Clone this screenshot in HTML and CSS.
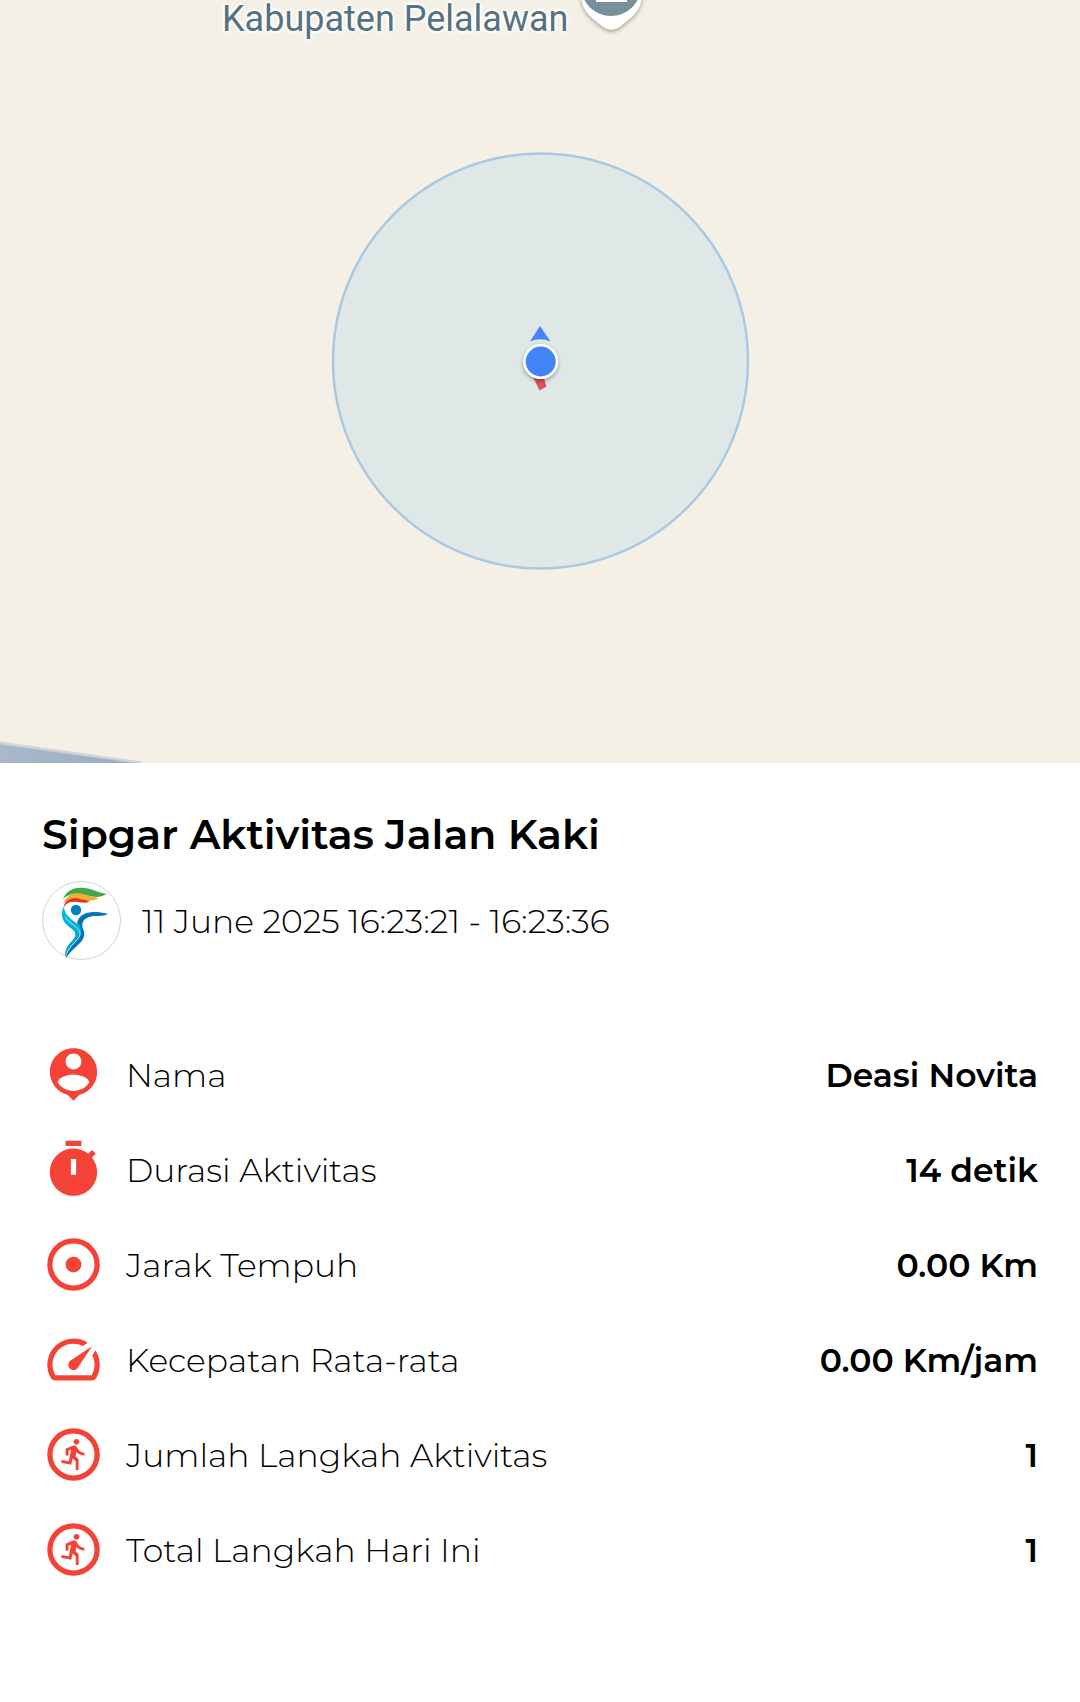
FILE: index.html
```html
<!DOCTYPE html>
<html lang="id">
<head>
<meta charset="utf-8">
<meta name="viewport" content="width=device-width, initial-scale=1">
<title>Sipgar Aktivitas Jalan Kaki</title>
<link rel="stylesheet" href="styles.css">
</head>
<body>
<main class="page">
  <section class="map" aria-label="Peta">
    <svg class="map-canvas" viewBox="0 0 1080 763" preserveAspectRatio="xMidYMid slice" aria-hidden="true">
      <defs>
        <filter id="shadow" x="-30%" y="-30%" width="160%" height="160%">
          <feDropShadow dx="0" dy="2" stdDeviation="2" flood-color="#000" flood-opacity=".35"/>
        </filter>
        <linearGradient id="water" x1="0" y1="0" x2="1" y2="0">
          <stop offset="0" stop-color="#a9b9ca"/>
          <stop offset="1" stop-color="#9aabc4"/>
        </linearGradient>
      </defs>
      <path d="M0 744L138 763H0z" fill="url(#water)"/>
      <path d="M0 743L142 763" stroke="#c3cad0" stroke-opacity=".7" stroke-width="3"/>
      <path d="M581 -8C581 12 592 17 602 26Q611 33 621 26C631 17 642 12 642 -8z" fill="#fff" filter="url(#shadow)"/>
      <circle cx="611" cy="-14" r="30" fill="#78909c"/>
      <path d="M596 0h31v2h-31z" fill="#fff"/>
      <circle cx="540.500" cy="361" r="207.500" fill="#dfe8e7" stroke="#a9c9e2" stroke-width="2.500"/>
      <path d="M533 377h10.500l3 9.500-7 4z" fill="#dd5656"/>
      <path d="M540 326l10.500 15.500Q540 337 530 341.500z" fill="#4285f4"/>
      <circle cx="540.700" cy="361.500" r="17.500" fill="#fff" filter="url(#shadow)"/>
      <circle cx="540.700" cy="361.500" r="15" fill="#4285f4"/>
    </svg>
    <span class="map-label">Kabupaten Pelalawan</span>
  </section>

  <section class="panel">
    <h1 class="title">Sipgar Aktivitas Jalan Kaki</h1>
    <div class="session">
      <svg class="logo" viewBox="0 0 79 79" aria-hidden="true">
        <defs>
          <linearGradient id="body" x1="0" y1="0" x2="0" y2="1">
            <stop offset="0" stop-color="#00c4e0"/>
            <stop offset="1" stop-color="#0a8fc0"/>
          </linearGradient>
        </defs>
        <circle cx="39.500" cy="39.500" r="39" fill="#fff" stroke="#d4d4d4"/>
        <path d="M21 18C25 8 34 6 43 7C51 8 57 12 65 13C54 19 47 14 38 13C31 12 25 14 21 18z" fill="#45a649"/>
        <path d="M21 23C25 13 33 11 41 13C47 15 52 16 57 17C48 22 42 18 35 18C29 17 24 19 21 23z" fill="#f2ae2e"/>
        <path d="M22 26C22 19 31 15 38 18C42 19 45 19 48 20C42 24 37 20 31 21C26 21 24 23 22 26z" fill="#e0332c"/>
        <circle cx="34" cy="29" r="5.200" fill="#0081bf"/>
        <path d="M22 25C17 35 21 42 30 48C36 53 33 57 28 62C24 67 22 72 24 76C24 68 32 63 38 57C43 50 40 46 33 41C26 36 22 32 22 25z" fill="url(#body)"/>
        <path d="M35 42C37 33 45 31 54 31C59 31 62 32 66 33C60 36 53 34 47 36C41 38 39 43 41 48C45 56 39 61 34 66C29 70 27 73 24 77C24 69 31 64 37 57C41 51 39 46 35 42z" fill="#0077b6"/>
        <path d="M23 36C29 44 39 47 38 54C36 60 27 65 25 72" fill="none" stroke="#fff" stroke-width=".7"/>
      </svg>
      <time class="session-time" datetime="2025-06-11T16:23:21">11 June 2025 16:23:21 - 16:23:36</time>
    </div>

    <dl class="stats">
      <div class="stat">
        <dt class="stat-name">
          <svg class="icon" viewBox="0 0 24 24" aria-hidden="true"><path d="M12 2c-4.970 0-9 4.030-9 9 0 4.170 2.840 7.670 6.690 8.690L12 22l2.310-2.310C18.160 18.670 21 15.170 21 11c0-4.970-4.030-9-9-9zm0 2c1.660 0 3 1.340 3 3s-1.340 3-3 3-3-1.340-3-3 1.340-3 3-3zm0 14.300c-2.500 0-4.710-1.280-6-3.220.030-1.990 4-3.080 6-3.080 1.990 0 5.970 1.090 6 3.080-1.290 1.940-3.500 3.220-6 3.220z"/></svg>
          Nama
        </dt>
        <dd class="stat-value">Deasi Novita</dd>
      </div>
      <div class="stat">
        <dt class="stat-name">
          <svg class="icon" viewBox="0 0 24 24" aria-hidden="true"><path d="M9 1h6v2H9zM19.030 7.390l1.420-1.420c-.430-.510-.900-.990-1.410-1.410l-1.420 1.420C16.070 4.740 14.120 4 12 4c-4.970 0-9 4.030-9 9s4.020 9 9 9 9-4.030 9-9c0-2.120-.740-4.070-1.970-5.610zM13 14h-2V8h2v6z"/></svg>
          Durasi Aktivitas
        </dt>
        <dd class="stat-value">14 detik</dd>
      </div>
      <div class="stat">
        <dt class="stat-name">
          <svg class="icon" viewBox="0 0 24 24" aria-hidden="true"><circle class="ring" cx="12" cy="12" r="9"/><circle cx="12" cy="12" r="3"/></svg>
          Jarak Tempuh
        </dt>
        <dd class="stat-value">0.00 Km</dd>
      </div>
      <div class="stat">
        <dt class="stat-name">
          <svg class="icon" viewBox="0 0 24 24" aria-hidden="true"><path d="M20.380 8.570l-1.230 1.850a8 8 0 0 1-.220 7.580H5.070A8 8 0 0 1 15.580 6.850l1.850-1.230A10 10 0 0 0 3.350 19a2 2 0 0 0 1.720 1h13.850a2 2 0 0 0 1.740-1 10 10 0 0 0-.270-10.440zM10.590 15.410a2 2 0 0 0 2.830 0l5.660-8.490-8.490 5.660a2 2 0 0 0 0 2.830z"/></svg>
          Kecepatan Rata-rata
        </dt>
        <dd class="stat-value">0.00 Km/jam</dd>
      </div>
      <div class="stat">
        <dt class="stat-name">
          <svg class="icon" viewBox="0 0 24 24" aria-hidden="true"><circle class="ring" cx="12" cy="12" r="9"/><path id="runner" transform="translate(5.700 5.260) scale(.55)" d="M13.490 5.480c1.100 0 2-.9 2-2s-.9-2-2-2-2 .9-2 2 .9 2 2 2zm-3.600 13.900l1-4.400 2.100 2v6h2v-7.500l-2.100-2 .6-3c1.300 1.500 3.300 2.500 5.500 2.500v-2c-1.900 0-3.500-1-4.300-2.400l-1-1.600c-.4-.6-1-1-1.700-1-.3 0-.5.1-.8.1l-5.200 2.200v4.700h2v-3.400l1.800-.7-1.600 8.100-4.900-1-.4 2 7 1.400z"/></svg>
          Jumlah Langkah Aktivitas
        </dt>
        <dd class="stat-value">1</dd>
      </div>
      <div class="stat">
        <dt class="stat-name">
          <svg class="icon" viewBox="0 0 24 24" aria-hidden="true"><circle class="ring" cx="12" cy="12" r="9"/><use href="#runner"/></svg>
          Total Langkah Hari Ini
        </dt>
        <dd class="stat-value">1</dd>
      </div>
    </dl>
  </section>
</main>
</body>
</html>
```
FILE: styles.css
```css
* {
  box-sizing: border-box;
}

body {
  margin: 0;
  background: #fff;
  color: #000;
  font-family: Montserrat, Inter, sans-serif;
}

.page {
  min-height: 100vh;
}

.map {
  position: relative;
  aspect-ratio: 1080 / 763;
  overflow: hidden;
  background: #f5f0e5;
}

.map-canvas {
  display: block;
  width: 100%;
  height: 100%;
}

.map-label {
  position: absolute;
  top: 1px;
  left: 222px;
  color: #56727f;
  font: 400 36px/36px Roboto, sans-serif;
  text-shadow: 0 0 3px #fff, 2px 0 2px #fff, -2px 0 2px #fff, 0 2px 2px #fff, 0 -2px 2px #fff;
}

.panel {
  padding: 47px 42px 120px;
}

.title {
  margin: 0;
  font-size: 41px;
  font-weight: 600;
  line-height: 48px;
}

.session {
  display: flex;
  align-items: center;
  gap: 21px;
  margin-top: 23px;
}

.logo {
  flex: none;
  width: 79px;
  height: 79px;
}

.session-time {
  font-size: 33px;
  font-weight: 300;
  line-height: 40px;
}

.stats {
  display: grid;
  gap: 32px;
  margin: 83px 0 0;
}

.stat {
  display: flex;
  align-items: center;
  justify-content: space-between;
  gap: 24px;
  font-size: 33px;
  line-height: 40px;
}

.stat-name {
  display: flex;
  align-items: center;
  gap: 21px;
  font-weight: 300;
}

.stat-value {
  margin: 0;
  font-weight: 600;
  text-align: right;
}

.icon {
  flex: none;
  width: 63px;
  height: 63px;
  fill: #f44336;
}

.ring {
  fill: none;
  stroke: #f44336;
  stroke-width: 2;
}
```
